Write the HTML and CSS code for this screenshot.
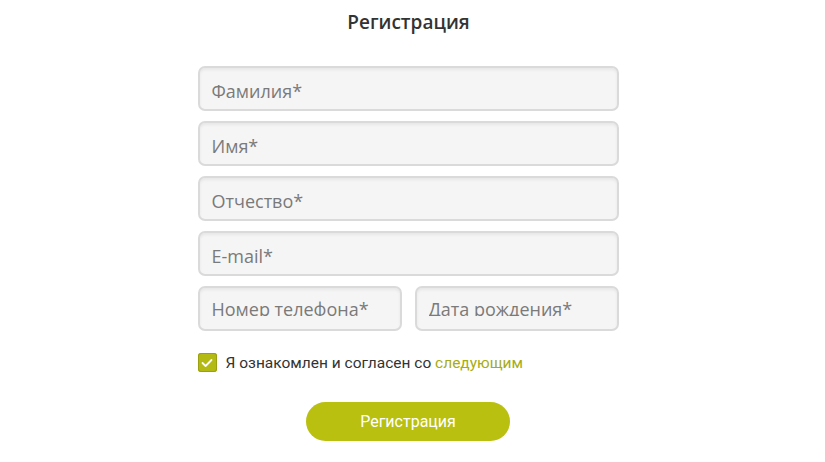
FILE: index.html
```html
<!DOCTYPE html>
<html lang="ru">
<head>
<meta charset="utf-8">
<link rel="stylesheet" href="styles.css">
</head>
<body>
<div class="page">
  <h1 class="title">Регистрация</h1>
  <form class="form">
    <input class="field" type="text" placeholder="Фамилия*">
    <input class="field" type="text" placeholder="Имя*">
    <input class="field" type="text" placeholder="Отчество*">
    <input class="field" type="text" placeholder="E-mail*">
    <div class="row">
      <div class="field-box"><div class="clip"><input class="inner" type="text" placeholder="Номер телефона*"></div></div>
      <div class="field-box"><div class="clip"><input class="inner" type="text" placeholder="Дата рождения*"></div></div>
    </div>
    <label class="agree">
      <span class="check"><svg width="12" height="10" viewBox="0 0 12 10"><path d="M1.5 5 L4.6 8 L10.5 2" fill="none" stroke="#fff" stroke-width="1.8" stroke-linecap="round" stroke-linejoin="round"/></svg></span>
      <span class="agree-text">Я ознакомлен и согласен со <a class="link">следующим</a></span>
    </label>
    <div class="actions"><button class="btn" type="button">Регистрация</button></div>
  </form>
</div>
</body>
</html>
```
FILE: styles.css
```css
html, body { margin: 0; padding: 0; background: #fff; }
.page { width: 825px; display: flex; flex-direction: column; align-items: center; }
.title {
  margin: 9px 0 0 0;
  font-family: "Open Sans", sans-serif;
  font-weight: 600;
  font-size: 19px;
  line-height: 26px;
  color: #333;
  transform: translateX(-4px);
}
.form { width: 421px; margin-top: 31px; margin-left: -9px; display: flex; flex-direction: column; gap: 10px; }
.field, .field-box {
  box-sizing: border-box;
  height: 45px;
  width: 100%;
  margin: 0;
  border: 2px solid #dadada;
  border-radius: 7px;
  background: #f5f5f5;
  box-shadow: inset 0 2px 3px rgba(0,0,0,0.06);
}
.field {
  padding: 5px 12px 0 12px;
  font-family: "Open Sans", sans-serif;
  font-size: 18px;
  color: #555;
  outline: none;
}
.field::placeholder, .inner::placeholder { color: #7a7a7a; }
.row { display: flex; gap: 13px; }
.row .field-box { flex: 1; }
.clip { height: 28px; overflow: hidden; }
.inner {
  box-sizing: border-box;
  display: block;
  width: 100%;
  height: 41px;
  margin: 0;
  padding: 0 12px;
  border: none;
  background: transparent;
  font-family: "Open Sans", sans-serif;
  font-size: 18px;
  color: #555;
  outline: none;
}
.agree { display: flex; align-items: center; gap: 9px; margin-top: 12px; }
.check {
  width: 19px; height: 19px; border-radius: 3px; background: #b3ba14;
  box-shadow: inset 0 0 0 1px #9aa010;
  display: flex; align-items: center; justify-content: center;
}
.agree-text { font-family: Roboto, sans-serif; font-size: 15.5px; color: #333; }
.link { color: #a6ac14; text-decoration: none; }
.actions { display: flex; justify-content: center; margin-top: 20px; }
.btn {
  width: 204px; height: 39px; border: none; border-radius: 20px;
  background: #b9c00f; color: #fff;
  font-family: Roboto, sans-serif; font-size: 16px;
}
```
